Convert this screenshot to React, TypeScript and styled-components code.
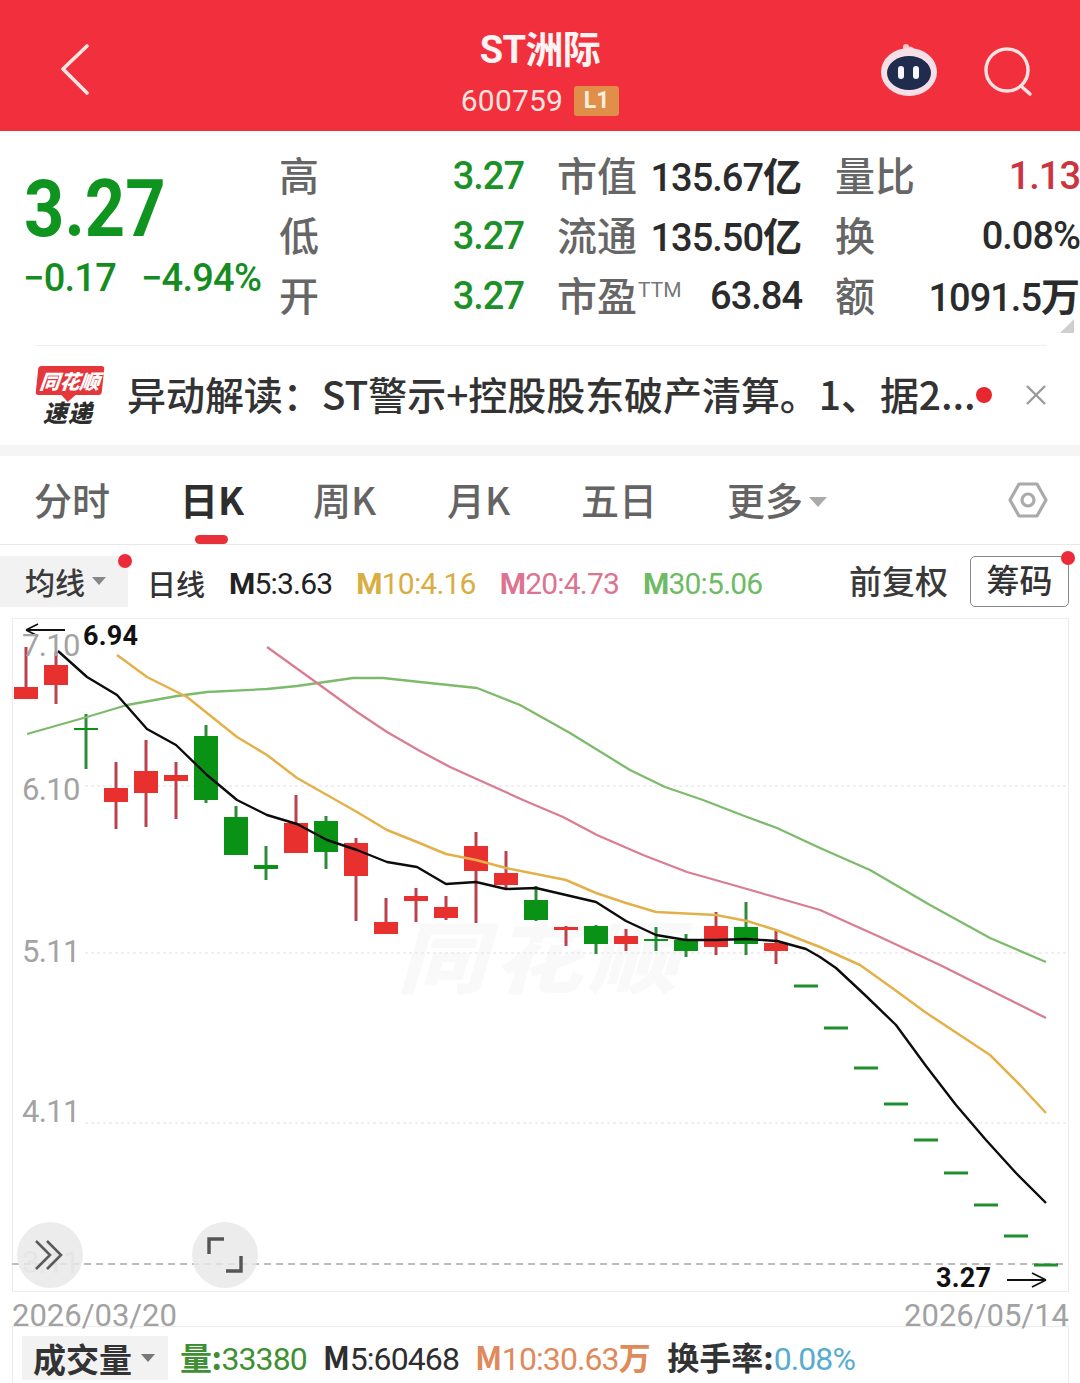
import React from 'react';
import styled, { createGlobalStyle } from 'styled-components';

const Global = createGlobalStyle`
  html, body { margin: 0; padding: 0; background: #fff; }
  #root { width: 1080px; height: 1383px; overflow: hidden; }
`;

const FONT = `Roboto, "Noto Sans CJK SC", sans-serif`;
const CJK = `"Noto Sans CJK SC", Roboto, sans-serif`;

const Page = styled.div`
  width: 1080px; height: 1383px; display: flex; flex-direction: column;
  background: #fff; font-family: ${FONT}; position: relative; overflow: hidden;
`;

/* ---------- header ---------- */
const Header = styled.header`
  height: 131px; box-sizing: border-box; background: #f22f3c; color: #fff;
  display: grid; grid-template-columns: 1fr auto 1fr; align-items: center; padding: 6px 47px 0;
`;
const BackIcon = styled.svg`margin-left: 13px; margin-top: 2px; display: block;`;
const TitleBlock = styled.div`display: flex; flex-direction: column; align-items: center; gap: 10px; padding-top: 4px;`;
const Title = styled.div`font: 700 38px/50px ${FONT}; letter-spacing: -0.6px; color: #fff4f3;`;
const CodeRow = styled.div`display: flex; align-items: center; gap: 11px; height: 32px;`;
const Code = styled.span`font: 400 30px/32px ${FONT}; color: #fbe3df; letter-spacing: .2px;`;
const Badge = styled.span`
  width: 45px; height: 30px; border-radius: 3px; background: #e28e4b; color: #fdf0dd;
  font: 700 23px/30px ${FONT}; text-align: center;
`;
const HeaderRight = styled.div`display: flex; justify-content: flex-end; align-items: center; gap: 44px; padding-top: 4px;`;

/* ---------- quote ---------- */
const Quote = styled.section`display: flex; height: 199px; padding-top: 15px; box-sizing: content-box; position: relative;`;
const PriceCol = styled.div`width: 280px; padding-left: 25px; box-sizing: border-box;`;
const BigPrice = styled.div`
  font: 700 80px/66px ${FONT}; color: #0f9420; width: 160px; margin-top: 30px;
  transform: scaleX(.88); transform-origin: left center; margin-left: -1px;
`;
const ChangeRow = styled.div`
  display: flex; gap: 25px; margin-top: 13px; margin-left: -2px; font: 500 38px/46px ${FONT}; color: #158c22; white-space: nowrap;
  letter-spacing: -.75px;
`;
const StatGrid = styled.div`display: grid; grid-template-columns: repeat(3, 244px); grid-auto-rows: 60px; column-gap: 34px;`;
const Stat = styled.div`display: flex; justify-content: space-between; align-items: center;`;
const StatLabel = styled.span`font: 500 40px/60px ${CJK}; color: #666; white-space: nowrap; margin-left: -1px; margin-top: -4px;`;
const Sup = styled.sup`font: 400 21px/1 ${FONT}; color: #777; vertical-align: 14px; margin-left: 1px;`;
const StatValue = styled.span<{ $color?: string }>`
  font: 500 38px/60px ${FONT}; color: ${p => p.$color || '#2b2b2b'}; white-space: nowrap; letter-spacing: -1px;
  & b { font: 700 39px/60px ${CJK}; letter-spacing: 0; }
`;
const FoldMark = styled.i`
  position: absolute; right: 6px; bottom: 12px; width: 0; height: 0;
  border-left: 14px solid transparent; border-bottom: 14px solid #cfcfcf;
`;
const Divider = styled.div`height: 1px; margin: 0 33px 0 35px; background: #eeeeee;`;

/* ---------- news ---------- */
const News = styled.section`height: 99px; display: flex; align-items: center; padding-left: 35px; position: relative;`;
const Logo = styled.div`width: 70px; display: flex; flex-direction: column; align-items: center; margin-right: 22px; margin-top: 1px;`;
const LogoTop = styled.div`
  position: relative; width: 66px; height: 29px; background: #e5363c; border-radius: 3px; transform: skewX(-6deg);
  color: #fff; font: italic 900 20px/29px ${CJK}; text-align: center; white-space: nowrap;
  &::after { content: ''; position: absolute; left: 28px; bottom: -5px; width: 10px; height: 10px; background: #e5363c; transform: rotate(45deg); z-index: -1; }
`;
const LogoBottom = styled.div`font: italic 900 24px/30px ${CJK}; color: #2d2d2d; margin-top: 2px; letter-spacing: 1px; margin-left: -4px;`;
const NewsText = styled.div`font: 500 39px/50px ${CJK}; color: #333; white-space: nowrap; width: 850px; margin-top: -5px; letter-spacing: -.06px;`;
const NewsDot = styled.i`position: absolute; left: 976px; top: 41px; width: 16px; height: 16px; border-radius: 50%; background: #e6282e;`;
const CloseBtn = styled.span`position: absolute; left: 1025px; top: 38px; display: flex;`;
const Band = styled.div`height: 11px; background: #f5f5f5;`;

/* ---------- tabs ---------- */
const Tabs = styled.nav`height: 88px; border-bottom: 1px solid #e8e8e8; position: relative; display: flex;`;
const Tab = styled.span<{ $active?: boolean; $x: number }>`
  position: absolute; left: ${p => p.$x}px; top: 18px;
  font: ${p => (p.$active ? 700 : 500)} 38px/50px ${CJK}; color: ${p => (p.$active ? '#2e2e2e' : '#646464')};
  white-space: nowrap;
  ${p => p.$active && `&::after { content: ''; position: absolute; left: 15px; top: 61px; width: 33px; height: 9px; border-radius: 5px; background: #e8303a; }`}
`;
const Caret = styled.i<{ $size: number; $color: string }>`
  display: inline-block; width: 0; height: 0; vertical-align: middle;
  border-left: ${p => p.$size}px solid transparent; border-right: ${p => p.$size}px solid transparent;
  border-top: ${p => p.$size * 1.15}px solid ${p => p.$color};
`;
const MoreCaret = styled(Caret)`margin-left: -3px; margin-top: -6px;`;
const SettingsIcon = styled.span`position: absolute; left: 1008px; top: 25px; display: flex;`;

/* ---------- ma row ---------- */
const MaRow = styled.div`height: 73px; display: flex; align-items: center; position: relative;`;
const Selector = styled.div`
  width: 128px; height: 51px; margin-top: -1px; background: #f2f2f2; display: flex; align-items: center; gap: 7px;
  padding-left: 25px; box-sizing: border-box; font: 500 30px/51px ${CJK}; color: #3a3a3a; position: relative; flex: none;
`;
const RedDot = styled.i<{ $size: number; $r: number; $t: number }>`
  position: absolute; width: ${p => p.$size}px; height: ${p => p.$size}px; border-radius: 50%; background: #ec2a3a;
  right: ${p => p.$r}px; top: ${p => p.$t}px;
`;
const MaLabel = styled.span`font: 500 29px/40px ${CJK}; color: #333; margin-left: 19px; margin-right: 24px; white-space: nowrap; margin-top: 2px;`;
const Ma = styled.span<{ $color: string }>`
  font: 400 30px/40px ${FONT}; color: ${p => p.$color}; margin-right: 24px; margin-top: 4px; white-space: nowrap; letter-spacing: -.8px;
  & b { font-weight: 700; }
`;
const MaRight = styled.div`margin-left: auto; display: flex; align-items: center; gap: 22px; padding-right: 11px;`;
const Adjust = styled.span`font: 500 33px/40px ${CJK}; color: #3a3a3a; white-space: nowrap; margin-top: -4px;`;
const ChipBtn = styled.span`
  position: relative; width: 99px; height: 51px; border: 1px solid #888; border-radius: 5px; box-sizing: border-box;
  font: 500 33px/45px ${CJK}; color: #333; text-align: center;
`;

/* ---------- chart ---------- */
const Chart = styled.div`
  position: relative; margin: 0 11px 0 12px; height: 674px; box-sizing: border-box;
  border: 1px solid #ececec;
`;
const ChartSvg = styled.svg`position: absolute; left: -1px; top: -1px; display: block;`;
const AxisLabel = styled.span<{ $y: number; $faint?: boolean }>`
  position: absolute; left: 9px; top: ${p => p.$y}px; font: 400 31px/36px ${FONT}; color: ${p => (p.$faint ? '#d6d6d6' : '#a3a3a3')};
  letter-spacing: -.7px;
`;
const PriceTag = styled.span<{ $x: number; $y: number }>`
  position: absolute; left: ${p => p.$x}px; top: ${p => p.$y}px; font: 700 27px/32px ${FONT}; color: #111;
  letter-spacing: .2px;
`;
const Watermark = styled.span`
  position: absolute; left: 384px; top: 284px; font: italic 900 78px/100px ${CJK}; color: #f9f9f9; letter-spacing: 5px; white-space: nowrap;
  transform: scaleX(1.15); transform-origin: left center;
`;
const RoundBtn = styled.span<{ $x: number }>`
  position: absolute; left: ${p => p.$x}px; top: 603px; width: 66px; height: 66px; border-radius: 50%;
  background: rgba(232, 232, 232, .82); display: flex; align-items: center; justify-content: center;
`;

/* ---------- bottom ---------- */
const DateRow = styled.div`
  height: 34px; display: flex; justify-content: space-between; padding: 0 11px 0 12px;
  font: 400 31px/47px ${FONT}; color: #a2a2a2; position: relative; z-index: 1; letter-spacing: 0;
`;
const VolumeRow = styled.div`
  height: 57px; margin: 0 11px 0 12px; border: 1px solid #ececec; border-bottom: 0; display: flex; align-items: center; box-sizing: border-box;
`;
const VolSelector = styled.div`
  width: 146px; height: 44px; margin-left: 9px; margin-top: 6px; background: #f2f2f2; padding-left: 11px; box-sizing: border-box;
  display: flex; align-items: center; gap: 9px; font: 700 33px/44px ${CJK}; color: #333; flex: none;
`;
const VolItem = styled.span<{ $color: string; $gap: number }>`
  font: 400 32px/44px ${FONT}; color: ${p => p.$color}; margin-left: ${p => p.$gap}px; margin-top: 4px; white-space: nowrap; letter-spacing: -.9px;
  & b { font: 700 32px/44px ${CJK}; letter-spacing: -.5px; }
  & em { font: 700 32px/44px ${CJK}; color: #333; letter-spacing: 0; font-style: normal; }
`;

/* ---------- data ---------- */
type C = [number, 'r' | 'g', number, number, number, number];
const candles: C[] = [
  [26, 'r', 647, 699, 687, 699], [56, 'r', 652, 704, 665, 685], [86, 'g', 714, 769, 728, 730],
  [116, 'r', 762, 829, 788, 802], [146, 'r', 740, 827, 771, 793], [176, 'r', 762, 819, 775, 781],
  [206, 'g', 725, 803, 736, 800], [236, 'g', 806, 855, 817, 855], [266, 'g', 846, 880, 865, 869],
  [296, 'r', 795, 853, 823, 853], [326, 'g', 816, 869, 821, 852], [356, 'r', 838, 921, 843, 876],
  [386, 'r', 898, 934, 922, 934], [416, 'r', 888, 922, 896, 901], [446, 'r', 896, 920, 907, 918],
  [476, 'r', 832, 923, 846, 871], [506, 'r', 851, 888, 873, 885], [536, 'g', 886, 921, 900, 920],
  [566, 'r', 926, 946, 927, 930], [596, 'g', 925, 954, 926, 944], [626, 'r', 929, 951, 936, 944],
  [656, 'g', 927, 951, 939, 941], [686, 'g', 934, 957, 940, 951], [716, 'r', 912, 955, 926, 947],
  [746, 'g', 902, 955, 927, 944], [776, 'r', 931, 964, 943, 951],
];
const dashes: [number, number][] = [[806, 986], [836, 1028], [866, 1068], [896, 1104], [926, 1140], [956, 1173], [986, 1205], [1016, 1236], [1046, 1265]];

const m5 = '58,651 87,677 117,695 147,729 176,745 207,775 237,800 267,815 297,824 327,840 357,850 387,862 417,867 446,884 476,882 506,889 536,888 566,895 596,902 626,921 656,935 686,940 716,940 746,939 777,941 806,949 820,957 836,968 866,996 896,1025 926,1066 956,1105 986,1140 1016,1173 1046,1203';
const m10 = '117,655 147,677 177,692 187,697 237,737 267,755 297,778 327,795 357,812 387,830 417,842 446,854 476,860 506,868 536,874 566,880 596,893 626,903 656,912 716,915 747,921 776,930 820,947 860,965 895,990 925,1012 990,1055 1020,1085 1046,1113';
const m20 = '267,647 317,683 357,712 387,732 420,751 450,767 490,785 523,800 563,817 597,835 643,855 687,872 733,885 820,910 880,937 940,965 1046,1018';
const m30 = '27,734 87,717 127,705 177,696 207,692 267,689 297,686 353,678 383,678 420,682 477,688 520,705 570,733 630,770 665,787 703,800 747,817 777,828 820,848 870,870 930,905 990,938 1046,962';

const Robot = () => (
  <svg width="60" height="60" viewBox="0 0 60 60">
    <path d="M29 12 C28 7 31 5 34 8" fill="none" stroke="#f6d3d8" strokeWidth="2" />
    <circle cx="27" cy="6" r="3" fill="#f7c9cd" />
    <ellipse cx="30" cy="31" rx="28" ry="24" fill="#f6dfe6" />
    <ellipse cx="30" cy="32" rx="22" ry="17" fill="#1f2c4e" />
    <rect x="19" y="25" width="6" height="13" rx="3" fill="#f3f6fb" />
    <rect x="34" y="25" width="6" height="13" rx="3" fill="#f3f6fb" />
  </svg>
);
const SearchIcon = () => (
  <svg width="50" height="50" viewBox="0 0 50 50" fill="none" stroke="#fde4e2" strokeWidth="3.4" strokeLinecap="round">
    <circle cx="24" cy="24" r="21" />
    <path d="M38 40 L47 48" />
  </svg>
);

export default function App() {
  return (
    <Page>
      <Global />
      <Header>
        <BackIcon width="30" height="52" viewBox="0 0 30 52" fill="none" stroke="#fde7e4" strokeWidth="3.6" strokeLinecap="round" strokeLinejoin="round">
          <path d="M27 2 L3 25 L27 49" />
        </BackIcon>
        <TitleBlock>
          <Title>ST洲际</Title>
          <CodeRow><Code>600759</Code><Badge>L1</Badge></CodeRow>
        </TitleBlock>
        <HeaderRight><Robot /><SearchIcon /></HeaderRight>
      </Header>

      <Quote>
        <PriceCol>
          <BigPrice>3.27</BigPrice>
          <ChangeRow><span>−0.17</span><span>−4.94%</span></ChangeRow>
        </PriceCol>
        <StatGrid>
          <Stat><StatLabel>高</StatLabel><StatValue $color="#1b9128">3.27</StatValue></Stat>
          <Stat><StatLabel>市值</StatLabel><StatValue>135.67<b>亿</b></StatValue></Stat>
          <Stat><StatLabel>量比</StatLabel><StatValue $color="#c9363f">1.13</StatValue></Stat>
          <Stat><StatLabel>低</StatLabel><StatValue $color="#1b9128">3.27</StatValue></Stat>
          <Stat><StatLabel>流通</StatLabel><StatValue>135.50<b>亿</b></StatValue></Stat>
          <Stat><StatLabel>换</StatLabel><StatValue>0.08%</StatValue></Stat>
          <Stat><StatLabel>开</StatLabel><StatValue $color="#1b9128">3.27</StatValue></Stat>
          <Stat><StatLabel>市盈<Sup>TTM</Sup></StatLabel><StatValue>63.84</StatValue></Stat>
          <Stat><StatLabel>额</StatLabel><StatValue>1091.5<b>万</b></StatValue></Stat>
        </StatGrid>
        <FoldMark />
      </Quote>
      <Divider />

      <News>
        <Logo>
          <LogoTop>同花顺</LogoTop>
          <LogoBottom>速递</LogoBottom>
        </Logo>
        <NewsText>异动解读：ST警示+控股股东破产清算。1、据2...</NewsText>
        <NewsDot />
        <CloseBtn>
          <svg width="22" height="22" viewBox="0 0 22 22" stroke="#9a9a9a" strokeWidth="2.4"><path d="M2 2 L20 20 M20 2 L2 20" /></svg>
        </CloseBtn>
      </News>
      <Band />

      <Tabs>
        <Tab $x={34}>分时</Tab>
        <Tab $x={180} $active>日K</Tab>
        <Tab $x={313}>周K</Tab>
        <Tab $x={447}>月K</Tab>
        <Tab $x={581}>五日</Tab>
        <Tab $x={727}>更多 <MoreCaret $size={9} $color="#aaa" /></Tab>
        <SettingsIcon>
          <svg width="40" height="38" viewBox="0 0 40 38" fill="none" stroke="#aaaaaa" strokeWidth="3.2" strokeLinejoin="round">
            <path d="M11 3 H29 L38 19 L29 35 H11 L2 19 Z" />
            <circle cx="20" cy="19" r="6" />
          </svg>
        </SettingsIcon>
      </Tabs>

      <MaRow>
        <Selector>
          均线<Caret $size={7} $color="#888" />
          <RedDot $size={14} $r={-4} $t={-2} />
        </Selector>
        <MaLabel>日线</MaLabel>
        <Ma $color="#222"><b>M</b>5:3.63</Ma>
        <Ma $color="#d9ad3f"><b>M</b>10:4.16</Ma>
        <Ma $color="#dc7391"><b>M</b>20:4.73</Ma>
        <Ma $color="#6dbb65"><b>M</b>30:5.06</Ma>
        <MaRight>
          <Adjust>前复权</Adjust>
          <ChipBtn>筹码<RedDot $size={14} $r={-7} $t={-6} /></ChipBtn>
        </MaRight>
      </MaRow>

      <Chart>
        <Watermark>同花顺</Watermark>
        <ChartSvg width="1056" height="674" viewBox="12 618 1056 674">
          {[786, 953, 1123].map(y => (
            <line key={y} x1="85" x2="1067" y1={y} y2={y} stroke="#eaeaea" strokeWidth="1.5" strokeDasharray="3 3" />
          ))}
          <line x1="12" x2="1067" y1="1264" y2="1264" stroke="#a8a8a0" strokeWidth="1.5" strokeDasharray="7 5" />
          {candles.map(([x, k, wt, wb, bt, bb]) => {
            const body = k === 'r' ? '#e8302f' : '#0a9216';
            const wick = k === 'r' ? '#b9424c' : '#2f8b3a';
            return (
              <g key={x}>
                <line x1={x} x2={x} y1={wt} y2={wb} stroke={wick} strokeWidth="3" />
                <rect x={x - 12} y={bt} width="24" height={bb - bt} fill={body} />
              </g>
            );
          })}
          {dashes.map(([x, y]) => (
            <rect key={x} x={x - 12} y={y - 1.5} width="24" height="3" fill="#1f8e2c" />
          ))}
          <polyline points={m30} fill="none" stroke="#7dbb6c" strokeWidth="2.3" strokeLinejoin="round" />
          <polyline points={m20} fill="none" stroke="#d97d92" strokeWidth="2.3" strokeLinejoin="round" />
          <polyline points={m10} fill="none" stroke="#e3b04a" strokeWidth="2.5" strokeLinejoin="round" />
          <polyline points={m5} fill="none" stroke="#0c0c0c" strokeWidth="2.4" strokeLinejoin="round" />
          <path d="M26 630 H65 M26 630 L38 624 M26 630 L38 636" stroke="#111" strokeWidth="1.8" fill="none" />
          <path d="M1007 1280 H1046 M1046 1280 L1032 1273 M1046 1280 L1032 1287" stroke="#111" strokeWidth="1.8" fill="none" />
        </ChartSvg>
        <AxisLabel $y={9}>7.10</AxisLabel>
        <AxisLabel $y={153}>6.10</AxisLabel>
        <AxisLabel $y={315}>5.11</AxisLabel>
        <AxisLabel $y={475}>4.11</AxisLabel>
        <AxisLabel $y={626} $faint>3.11</AxisLabel>
        <PriceTag $x={70} $y={1}>6.94</PriceTag>
        <PriceTag $x={923} $y={643}>3.27</PriceTag>
        <RoundBtn $x={4}>
          <svg width="34" height="32" viewBox="0 0 34 32" fill="none" stroke="#5b5b5b" strokeWidth="2.6">
            <path d="M3 2 L17 16 L3 30 M14 2 L28 16 L14 30" />
          </svg>
        </RoundBtn>
        <RoundBtn $x={179}>
          <svg width="36" height="36" viewBox="0 0 36 36" fill="none" stroke="#555" strokeWidth="3.4">
            <path d="M2 17 V2 H17 M19 34 H34 V19" />
          </svg>
        </RoundBtn>
      </Chart>

      <DateRow><span>2026/03/20</span><span>2026/05/14</span></DateRow>

      <VolumeRow>
        <VolSelector>成交量<Caret $size={7} $color="#777" /></VolSelector>
        <VolItem $color="#3f8f33" $gap={12}><b>量:</b>33380</VolItem>
        <VolItem $color="#2e2e2e" $gap={16}><b>M</b>5:60468</VolItem>
        <VolItem $color="#e08a5c" $gap={16}><b>M</b>10:30.63<b>万</b></VolItem>
        <VolItem $color="#58acd0" $gap={17}><em>换手率:</em>0.08%</VolItem>
      </VolumeRow>
    </Page>
  );
}
